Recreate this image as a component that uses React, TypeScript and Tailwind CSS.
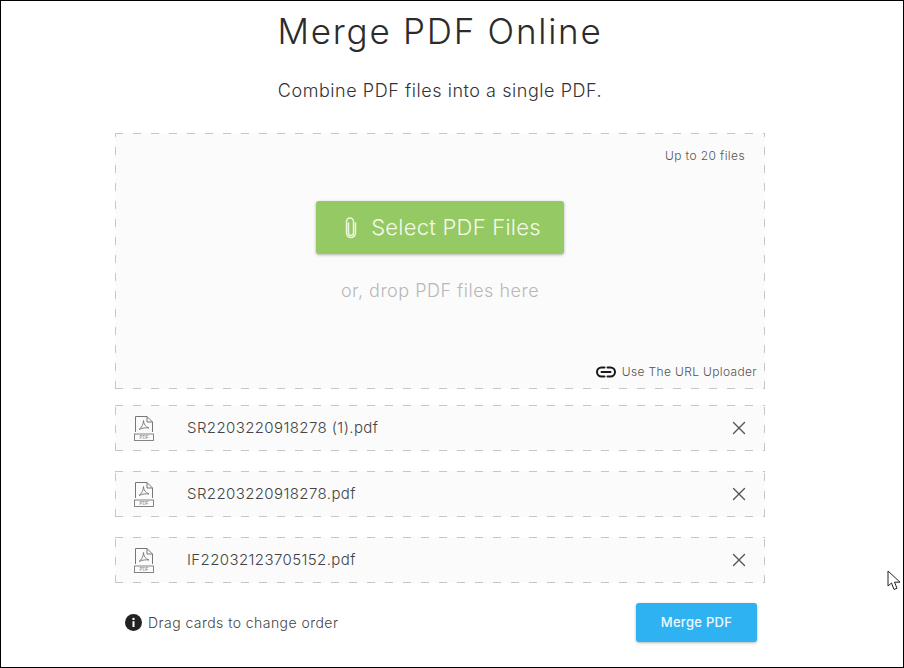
import React from 'react';
import { X } from 'lucide-react';

const FILES = ['SR2203220918278 (1).pdf', 'SR2203220918278.pdf', 'IF22032123705152.pdf'];

// long dashes, the css dashed border is too short for this
const DASHED =
  '[background:repeating-linear-gradient(90deg,#c6c6c6_0_8px,transparent_8px_18px)_top/100%_1px_no-repeat,repeating-linear-gradient(90deg,#c6c6c6_0_8px,transparent_8px_18px)_bottom/100%_1px_no-repeat,repeating-linear-gradient(0deg,#c6c6c6_0_8px,transparent_8px_18px)_left/1px_100%_no-repeat,repeating-linear-gradient(0deg,#c6c6c6_0_8px,transparent_8px_18px)_right/1px_100%_no-repeat,#fbfbfb]';

const PdfIcon = () => (
  <svg width="20" height="26" viewBox="0 0 20 26" fill="none" stroke="#777" strokeWidth="1">
    <path d="M1.5 17V1.5H13L18.5 7V17" />
    <path d="M13 1.5V7H18.5" />
    <path d="M5 14.5C7.5 13 9.5 9 9.5 5.5C9.5 9 11.5 12 15 13C12 12.5 8 13 5 14.5Z" strokeWidth="0.9" />
    <rect x="0.5" y="19" width="19" height="6.5" strokeWidth="0.9" />
    <text x="10" y="24.4" textAnchor="middle" fontSize="4.6" fill="#777" stroke="none" fontFamily="Inter, sans-serif">PDF</text>
  </svg>
);

const LinkIcon = () => (
  <svg width="20" height="12" viewBox="0 0 20 12" fill="none" stroke="#1a1a1a" strokeWidth="2" strokeLinecap="round">
    <path d="M8.5 1.5H5.5a4.5 4.5 0 0 0 0 9H8.5" />
    <path d="M11.5 1.5H14.5a4.5 4.5 0 0 1 0 9H11.5" />
    <path d="M5.5 6H14.5" />
  </svg>
);

const ClipIcon = () => (
  <svg width="14" height="22" viewBox="0 0 14 22" fill="none" stroke="#eef7de" strokeWidth="1.5" strokeLinecap="round">
    <path d="M4.5 6V16a2.5 2.5 0 0 0 5 0V4.5a3.5 3.5 0 0 0-7 0V16a4.5 4.5 0 0 0 9 0V6" />
  </svg>
);

const InfoIcon = () => (
  <svg width="17" height="17" viewBox="0 0 17 17">
    <circle cx="8.5" cy="8.5" r="8.5" fill="#222" />
    <rect x="7.5" y="7.2" width="2" height="5.8" fill="#fff" />
    <circle cx="8.5" cy="4.9" r="1.2" fill="#fff" />
  </svg>
);

const CursorIcon = () => (
  <svg width="15" height="21" viewBox="0 0 15 21" fill="#fff" stroke="#222" strokeWidth="1">
    <path d="M1 1V16L4.5 13L7 19.5L10 18.2L7.5 12.2H13Z" />
  </svg>
);

export default function App() {
  return (
    <div className="relative h-[668px] w-[904px] overflow-hidden border border-black bg-white font-['Inter',sans-serif] text-[#333]">
      <div className="ml-[114px] flex w-[650px] flex-col">
        <h1 className="mt-[8px] text-center text-[35px] leading-[44px] font-light tracking-[1.75px] text-[#2b2b2b]">Merge PDF Online</h1>
        <p className="mt-[26px] text-center text-[18px] leading-[24px] font-light tracking-[0.55px] text-[#333]">Combine PDF files into a single PDF.</p>

        {/* Drop zone */}
        <div className={`mt-[30px] flex h-[256px] flex-col ${DASHED}`}>
          <div className="mt-[15px] pr-[20px] text-right text-[12px] leading-[16px] font-light tracking-[0.4px] text-[#555]">Up to 20 files</div>
          <button className="mx-auto mt-[37px] flex h-[53px] w-[248px] items-center justify-center gap-[13px] rounded-[3px] bg-[#95c964] pl-[5px] text-[22px] font-light tracking-[0.25px] text-[#f4fae8] shadow-[0_1px_3px_rgba(0,0,0,0.3)]">
            <ClipIcon />
            Select PDF Files
          </button>
          <div className="mt-[24px] text-center text-[18px] leading-[26px] font-light tracking-[0.5px] text-[#b8b8b8]">or, drop PDF files here</div>
          <div className="mt-auto mb-[9px] flex items-center justify-end gap-[6px] pr-[8px] text-[12px] leading-[16px] font-light tracking-[0.35px] text-[#555]">
            <LinkIcon />
            Use The URL Uploader
          </div>
        </div>

        {/* File cards */}
        <div className="mt-[16px] flex flex-col gap-[20px]">
          {FILES.map((name) => (
            <div key={name} className={`flex h-[46px] items-center pr-[15px] pl-[19px] ${DASHED}`}>
              <PdfIcon />
              <span className="ml-[33px] flex-1 text-[15px] font-light tracking-[0.4px] text-[#444]">{name}</span>
              <X size={22} strokeWidth={1.5} color="#555" />
            </div>
          ))}
        </div>

        {/* Footer */}
        <div className="mt-[20px] flex items-center justify-between pr-[8px] pl-[10px]">
          <div className="flex items-center gap-[6px] text-[14px] font-light tracking-[0.45px] text-[#444]">
            <InfoIcon />
            Drag cards to change order
          </div>
          <button className="flex h-[39px] w-[121px] items-center justify-center rounded-[3px] bg-[#2eb2f2] text-[13px] font-medium tracking-[0.3px] text-[#eefaff] shadow-[0_1px_3px_rgba(0,0,0,0.3)]">Merge PDF</button>
        </div>
      </div>
      <div className="absolute top-[569px] left-[886px]">
        <CursorIcon />
      </div>
    </div>
  );
}
